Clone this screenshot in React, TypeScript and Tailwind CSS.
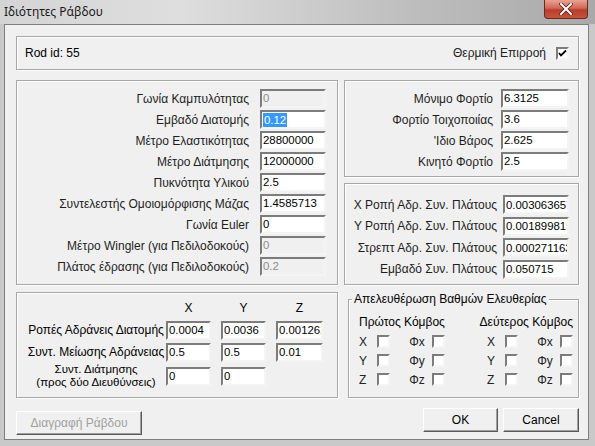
import React from "react";

const font = { fontFamily: '"Liberation Sans", Arial, sans-serif' };

function TextBox({
  value,
  w = "w-[66px]",
  disabled = false,
  selected = false,
  h = "h-[19px]",
}: {
  value: string;
  w?: string;
  disabled?: boolean;
  selected?: boolean;
  h?: string;
}) {
  return (
    <div
      className={`${w} ${h} shrink-0 overflow-hidden whitespace-nowrap border-2 border-t-[#7c7c7c] border-l-[#7c7c7c] border-b-[#f4f4f4] border-r-[#f4f4f4] ${
        disabled ? "bg-[#f0f0f0] text-[#8d8d8d]" : "bg-white text-black"
      } flex items-center pl-[1px] pt-[1px] text-[11.4px] leading-none`}
    >
      {selected ? (
        <span className="bg-[#3399ff] text-white px-[1px] leading-[14px]">{value}</span>
      ) : (
        <span>{value}</span>
      )}
    </div>
  );
}

function Check({ checked = false }: { checked?: boolean }) {
  return (
    <div className="w-[13px] h-[13px] shrink-0 bg-white border-2 border-t-[#7c7c7c] border-l-[#7c7c7c] border-b-[#f4f4f4] border-r-[#f4f4f4] flex items-center justify-center">
      {checked && (
        <svg width="9" height="9" viewBox="0 0 9 9">
          <path d="M1 4 L3 6.5 L8 1.5" stroke="#000" strokeWidth="1.8" fill="none" />
        </svg>
      )}
    </div>
  );
}

function Group({ className = "", children }: { className?: string; children: React.ReactNode }) {
  return (
    <div
      className={`border border-[#a7a7a7] shadow-[inset_1px_1px_0_#ffffff,1px_1px_0_#ffffff] ${className}`}
    >
      {children}
    </div>
  );
}

function Row({
  label,
  value,
  disabled,
  selected,
  boxW = "w-[66px]",
  gap = "gap-[11px]",
  h = "h-[21px]",
}: {
  label: string;
  value: string;
  disabled?: boolean;
  selected?: boolean;
  boxW?: string;
  gap?: string;
  h?: string;
}) {
  return (
    <div className={`flex items-center justify-end ${gap} ${h}`}>
      <span className="whitespace-nowrap text-[#1e1e1e]">{label}</span>
      <TextBox value={value} w={boxW} disabled={disabled} selected={selected} />
    </div>
  );
}

function Button({ label, w, disabled = false }: { label: string; w: string; disabled?: boolean }) {
  return (
    <div
      className={`${w} h-[24px] bg-[#f0f0f0] border border-t-white border-l-white border-b-[#5a5a5a] border-r-[#5a5a5a] shadow-[inset_-1px_-1px_0_#a0a0a0] flex items-center justify-center ${
        disabled ? "text-[#a0a0a0]" : "text-black"
      }`}
    >
      {label}
    </div>
  );
}

function NodeCol({ title, align }: { title: string; align: string }) {
  const rows = [
    ["X", "Φx"],
    ["Y", "Φy"],
    ["Z", "Φz"],
  ];
  return (
    <div className={`flex flex-col ${align}`}>
      <div className="h-[16px] leading-[16px] whitespace-nowrap">{title}</div>
      <div className="flex flex-col gap-[6px] mt-[5px]">
        {rows.map(([a, b]) => (
          <div key={a} className="flex items-center h-[13px] text-[#222]">
            <span className="w-[18px]">{a}</span>
            <Check />
            <span className="w-[30px] ml-[12px] text-center">{b}</span>
            <Check />
          </div>
        ))}
      </div>
    </div>
  );
}

export default function App() {
  return (
    <div
      className="w-[595px] h-[446px] bg-[#c9c9c9] relative overflow-hidden text-[12px] text-black"
      style={font}
    >
      {/* title bar */}
      <div className="h-[24px] flex items-center justify-between bg-[linear-gradient(90deg,#d4d4d4_0%,#dedede_30%,#bdbdbd_70%,#a9a9a9_100%)] pl-[4px] pr-[7px]">
        <span className="text-[12px] text-[#1a1a1a] pb-[1px]" style={{ fontFamily: '"Noto Sans", "Liberation Sans", sans-serif' }}>
          Ιδιότητες Ράβδου
        </span>
        <div className="self-start w-[44px] h-[19px] rounded-b-[4px] border border-[#6b2a20] border-t-0 bg-[linear-gradient(180deg,#e8a393_0%,#d2685a_45%,#b73d28_55%,#c7543d_100%)] flex items-center justify-center">
          <svg width="14" height="12" viewBox="0 0 14 12">
            <path d="M2 1 L12 11 M12 1 L2 11" stroke="#5a1c12" strokeWidth="3.6" strokeLinecap="square" />
            <path d="M2 1 L12 11 M12 1 L2 11" stroke="#ffffff" strokeWidth="2" strokeLinecap="square" />
          </svg>
        </div>
      </div>

      {/* client area */}
      <div className="absolute left-[4px] top-[24px] w-[585px] h-[416px] border border-[#7f7f7f] bg-[#f0f0f0]">
        <div className="flex flex-col pl-[11px] pt-[11px] pr-[9px]">
          {/* top group */}
          <Group className="w-[563px] h-[34px] flex items-center justify-between pl-[8px] pr-[9px]">
            <span>Rod id: 55</span>
            <div className="flex items-center gap-[10px]">
              <span className="text-[#222]">Θερμική Επιρροή</span>
              <Check checked />
            </div>
          </Group>

          {/* middle */}
          <div className="flex gap-[6px] mt-[10px]">
            <Group className="w-[322px] h-[205px] pt-[7px] pr-[11px] flex flex-col">
              <Row label="Γωνία Καμπυλότητας" value="0" disabled />
              <Row label="Εμβαδό Διατομής" value="0.12" selected />
              <Row label="Μέτρο Ελαστικότητας" value="28800000" />
              <Row label="Μέτρο Διάτμησης" value="12000000" />
              <Row label="Πυκνότητα Υλικού" value="2.5" />
              <Row label="Συντελεστής Ομοιομόρφισης Μάζας" value="1.4585713" />
              <Row label="Γωνία Euler" value="0" />
              <Row label="Μέτρο Wingler (για Πεδιλοδοκούς)" value="0" disabled />
              <Row label="Πλάτος έδρασης (για Πεδιλοδοκούς)" value="0.2" disabled />
            </Group>
            <div className="flex flex-col gap-[6px]">
              <Group className="w-[235px] h-[97px] pt-[7px] pr-[9px] flex flex-col">
                <Row label="Μόνιμο Φορτίο" value="6.3125" boxW="w-[68px]" gap="gap-[8px]" />
                <Row label="Φορτίο Τοιχοποιίας" value="3.6" boxW="w-[68px]" gap="gap-[8px]" />
                <Row label="'Ιδιο Βάρος" value="2.625" boxW="w-[68px]" gap="gap-[8px]" />
                <Row label="Κινητό Φορτίο" value="2.5" boxW="w-[68px]" gap="gap-[8px]" />
              </Group>
              <Group className="w-[235px] h-[102px] pt-[10px] pr-[9px] flex flex-col">
                <Row label="X Ροπή Αδρ. Συν. Πλάτους" value="0.003063657" boxW="w-[66px]" gap="gap-[6px]" h="h-[21.5px]" />
                <Row label="Y Ροπή Αδρ. Συν. Πλάτους" value="0.001899815" boxW="w-[66px]" gap="gap-[6px]" h="h-[21.5px]" />
                <Row label="Στρεπτ Αδρ. Συν. Πλάτους" value="0.000271163" boxW="w-[66px]" gap="gap-[6px]" h="h-[21.5px]" />
                <Row label="Εμβαδό Συν. Πλάτους" value="0.050715" boxW="w-[66px]" gap="gap-[6px]" h="h-[21.5px]" />
              </Group>
            </div>
          </div>

          {/* bottom */}
          <div className="flex mt-[7px]">
            <div className="flex flex-col">
              <Group className="w-[322px] h-[106px] pt-[7px] pl-[9px] flex flex-col">
                <div className="flex h-[16px] items-center">
                  <div className="w-[140px]" />
                  <div className="w-[45px] text-center">X</div>
                  <div className="w-[10px]" />
                  <div className="w-[45px] text-center">Y</div>
                  <div className="w-[10px]" />
                  <div className="w-[47px] text-center">Z</div>
                </div>
                <div className="flex items-center h-[22px] mt-[3px]">
                  <div className="w-[140px] text-center whitespace-nowrap">Ροπές Αδράνεις Διατομής</div>
                  <TextBox value="0.0004" w="w-[45px]" />
                  <div className="w-[10px]" />
                  <TextBox value="0.0036" w="w-[45px]" />
                  <div className="w-[10px]" />
                  <TextBox value="0.001262" w="w-[47px]" />
                </div>
                <div className="flex items-center h-[22px]">
                  <div className="w-[140px] text-center whitespace-nowrap">Συντ. Μείωσης Αδράνειας</div>
                  <TextBox value="0.5" w="w-[45px]" />
                  <div className="w-[10px]" />
                  <TextBox value="0.5" w="w-[45px]" />
                  <div className="w-[10px]" />
                  <TextBox value="0.01" w="w-[47px]" />
                </div>
                <div className="flex items-center h-[26px]">
                  <div className="w-[140px] text-center text-[11.5px] leading-[13px] whitespace-nowrap">
                    Συντ. Διάτμησης
                    <br />
                    (προς δύο Διευθύνσεις)
                  </div>
                  <TextBox value="0" w="w-[45px]" />
                  <div className="w-[10px]" />
                  <TextBox value="0" w="w-[45px]" />
                </div>
              </Group>
              <div className="mt-[13px]">
                <Button label="Διαγραφή Ράβδου" w="w-[126px]" disabled />
              </div>
            </div>

            <div className="flex flex-col ml-[10px]">
              <div className="relative w-[231px] h-[106px] pt-[7px]">
                <Group className="w-[231px] h-[99px] pt-[14px] pl-[10px] pr-[5px] flex justify-between">
                  <NodeCol title="Πρώτος Κόμβος" align="items-start" />
                  <NodeCol title="Δεύτερος Κόμβος" align="items-end" />
                </Group>
                <span className="absolute left-[4px] top-0 px-[2px] bg-[#f0f0f0] leading-[14px] whitespace-nowrap">
                  Απελευθέρωση Βαθμών Ελευθερίας
                </span>
              </div>
              <div className="flex gap-[5px] mt-[10px] ml-[75px]">
                <Button label="OK" w="w-[75px]" />
                <Button label="Cancel" w="w-[76px]" />
              </div>
            </div>
          </div>
        </div>
      </div>
    </div>
  );
}
